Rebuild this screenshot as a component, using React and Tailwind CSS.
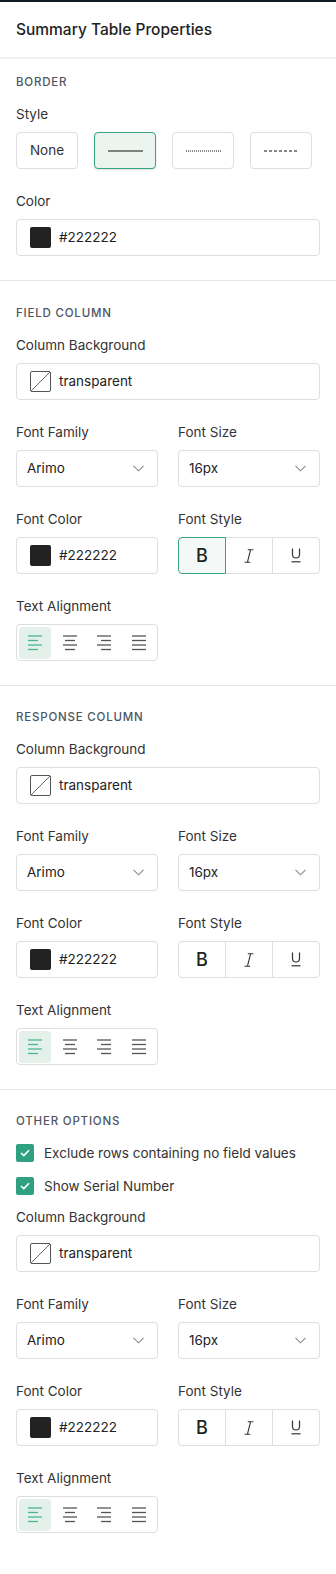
import React from 'react'

function Label({ children }) {
  return <div className="text-[13.5px] leading-5 text-[#333]">{children}</div>
}

function Field({ label, children }) {
  return (
    <div className="flex flex-col gap-2">
      <Label>{label}</Label>
      {children}
    </div>
  )
}

function SectionTitle({ children }) {
  return (
    <div className="text-[11.5px] leading-4 font-medium tracking-[0.8px] uppercase text-[#4d5661]">{children}</div>
  )
}

function ColorInput({ value }) {
  const transparent = value === 'transparent'
  return (
    <div className="flex items-center gap-2 h-[37px] pl-[13px] pr-3 border border-[#dedede] rounded-[4px] bg-white">
      {transparent ? (
        <svg width="21" height="21" viewBox="0 0 21 21" className="shrink-0">
          <rect x="0.5" y="0.5" width="20" height="20" rx="1.5" fill="white" stroke="#555" />
          <line x1="1" y1="20" x2="20" y2="1" stroke="#666" strokeWidth="1" />
        </svg>
      ) : (
        <div className="w-[21px] h-[21px] rounded-[2px] bg-[#222222] shrink-0" />
      )}
      <span className="text-[13.5px] text-[#222]">{value}</span>
    </div>
  )
}

function Select({ value }) {
  return (
    <div className="flex items-center justify-between h-[37px] pl-[10px] pr-[13px] border border-[#dedede] rounded-[4px] bg-white">
      <span className="text-[13.5px] text-[#222]">{value}</span>
      <svg width="11" height="7" viewBox="0 0 11 7" fill="none">
        <path d="M0.5 0.8 L5.5 5.8 L10.5 0.8" stroke="#8a8a8a" strokeWidth="1.1" />
      </svg>
    </div>
  )
}

function FontStyle({ boldActive }) {
  return (
    <div className="flex h-[37px]">
      <button
        className={
          'flex-1 flex items-center justify-center rounded-l-[4px] border relative z-10 ' +
          (boldActive ? 'border-[#34a386] bg-[#f4f9f7]' : 'border-[#dedede] bg-white')
        }
      >
        <span className="text-[18px] font-medium text-[#222] leading-none">B</span>
      </button>
      <button className="flex-1 flex items-center justify-center border border-[#dedede] -ml-px bg-white">
        <svg width="10" height="14" viewBox="0 0 10 14" fill="none">
          <path d="M3.8 0.7 H9.4 M0.6 13.3 H6.2 M6.6 0.7 L3.4 13.3" stroke="#333" strokeWidth="1.1" />
        </svg>
      </button>
      <button className="flex-1 flex items-center justify-center border border-[#dedede] -ml-px rounded-r-[4px] bg-white">
        <svg width="12" height="15" viewBox="0 0 12 15" fill="none">
          <path d="M2.5 0.5 V6.5 A3.5 3.5 0 0 0 9.5 6.5 V0.5" stroke="#333" strokeWidth="1.2" />
          <path d="M1.5 13.8 H10.5" stroke="#333" strokeWidth="1.2" />
        </svg>
      </button>
    </div>
  )
}

function AlignIcon({ kind, color }) {
  // full, short, full, short
  const rows = [1, 5.5, 10, 14.5]
  const lines = rows.map((y, i) => {
    const short = i % 2 === 1 && kind !== 'justify'
    let x1 = 0
    let x2 = 14
    if (short) {
      if (kind === 'left') { x1 = 0; x2 = 10 }
      if (kind === 'center') { x1 = 2; x2 = 12 }
      if (kind === 'right') { x1 = 4; x2 = 14 }
    }
    return <line key={i} x1={x1} y1={y} x2={x2} y2={y} stroke={color} strokeWidth="1.3" />
  })
  return (
    <svg width="14" height="16" viewBox="0 0 14 16">
      {lines}
    </svg>
  )
}

function Alignment() {
  const kinds = ['left', 'center', 'right', 'justify']
  return (
    <div className="flex gap-[3px] p-[2px] w-[142px] h-[37px] border border-[#dedede] rounded-[4px] bg-white">
      {kinds.map((k) => (
        <div
          key={k}
          className={
            'w-8 h-8 flex items-center justify-center rounded-[4px] ' +
            (k === 'left' ? 'bg-[#e3f1ea]' : '')
          }
        >
          <AlignIcon kind={k} color={k === 'left' ? '#4cb394' : '#555'} />
        </div>
      ))}
    </div>
  )
}

function ColumnFields({ boldActive }) {
  return (
    <>
      <Field label="Column Background">
        <ColorInput value="transparent" />
      </Field>
      <div className="grid grid-cols-2 gap-x-5">
        <Field label="Font Family">
          <Select value="Arimo" />
        </Field>
        <Field label="Font Size">
          <Select value="16px" />
        </Field>
      </div>
      <div className="grid grid-cols-2 gap-x-5">
        <Field label="Font Color">
          <ColorInput value="#222222" />
        </Field>
        <Field label="Font Style">
          <FontStyle boldActive={boldActive} />
        </Field>
      </div>
      <Field label="Text Alignment">
        <Alignment />
      </Field>
    </>
  )
}

function Checkbox({ label }) {
  return (
    <div className="flex items-center gap-[10px] h-5">
      <div className="w-[18px] h-[18px] rounded-[2px] bg-[#30a083] flex items-center justify-center shrink-0">
        <svg width="10" height="8" viewBox="0 0 10 8" fill="none">
          <path d="M1 4 L3.8 6.6 L9 1.2" stroke="white" strokeWidth="1.6" />
        </svg>
      </div>
      <span className="text-[13.5px] text-[#333]">{label}</span>
    </div>
  )
}

export default function App() {
  return (
    <div className="min-h-screen bg-white font-['Inter','Noto_Sans',sans-serif]">
      <div className="h-[2px] bg-[#0f1b26]" />
      <header className="h-[57px] flex items-center px-4 border-b-2 border-[#efefef]">
        <h1 className="text-[15.5px] font-medium text-[#222]">Summary Table Properties</h1>
      </header>

      {/* border */}
      <section className="px-4 pt-[15px] pb-6 border-b border-[#e6e6e6]">
        <SectionTitle>Border</SectionTitle>
        <div className="mt-[14px] flex flex-col gap-[22px]">
          <Field label="Style">
            <div className="flex gap-4">
              <button className="w-[62px] h-[37px] rounded-[4px] border border-[#dedede] bg-white text-[13.5px] text-[#333]">None</button>
              <button className="w-[62px] h-[37px] rounded-[4px] border border-[#34a386] bg-[#ebf4ef] flex items-center justify-center shadow-sm">
                <svg width="35" height="2" viewBox="0 0 35 2"><line x1="0" y1="1" x2="35" y2="1" stroke="#111" strokeWidth="1" /></svg>
              </button>
              <button className="w-[62px] h-[37px] rounded-[4px] border border-[#dedede] bg-white flex items-center justify-center">
                <svg width="35" height="2" viewBox="0 0 35 2"><line x1="0" y1="1" x2="35" y2="1" stroke="#111" strokeWidth="1" strokeDasharray="1 1" /></svg>
              </button>
              <button className="w-[62px] h-[37px] rounded-[4px] border border-[#dedede] bg-white flex items-center justify-center">
                <svg width="35" height="2" viewBox="0 0 35 2"><line x1="0" y1="1" x2="35" y2="1" stroke="#111" strokeWidth="1" strokeDasharray="3 2" /></svg>
              </button>
            </div>
          </Field>
          <Field label="Color">
            <ColorInput value="#222222" />
          </Field>
        </div>
      </section>

      {/* field column */}
      <section className="px-4 pt-6 pb-6 border-b border-[#e6e6e6]">
        <SectionTitle>Field Column</SectionTitle>
        <div className="mt-[14px] flex flex-col gap-[22px]">
          <ColumnFields boldActive />
        </div>
      </section>

      {/* response column */}
      <section className="px-4 pt-[23px] pb-6 border-b border-[#e6e6e6]">
        <SectionTitle>Response Column</SectionTitle>
        <div className="mt-[14px] flex flex-col gap-[22px]">
          <ColumnFields boldActive={false} />
        </div>
      </section>

      {/* other options */}
      <section className="px-4 pt-[23px] pb-10">
        <SectionTitle>Other Options</SectionTitle>
        <div className="mt-[14px] flex flex-col gap-[13px]">
          <Checkbox label="Exclude rows containing no field values" />
          <Checkbox label="Show Serial Number" />
        </div>
        <div className="mt-[11px] flex flex-col gap-[22px]">
          <ColumnFields boldActive={false} />
        </div>
      </section>
    </div>
  )
}
